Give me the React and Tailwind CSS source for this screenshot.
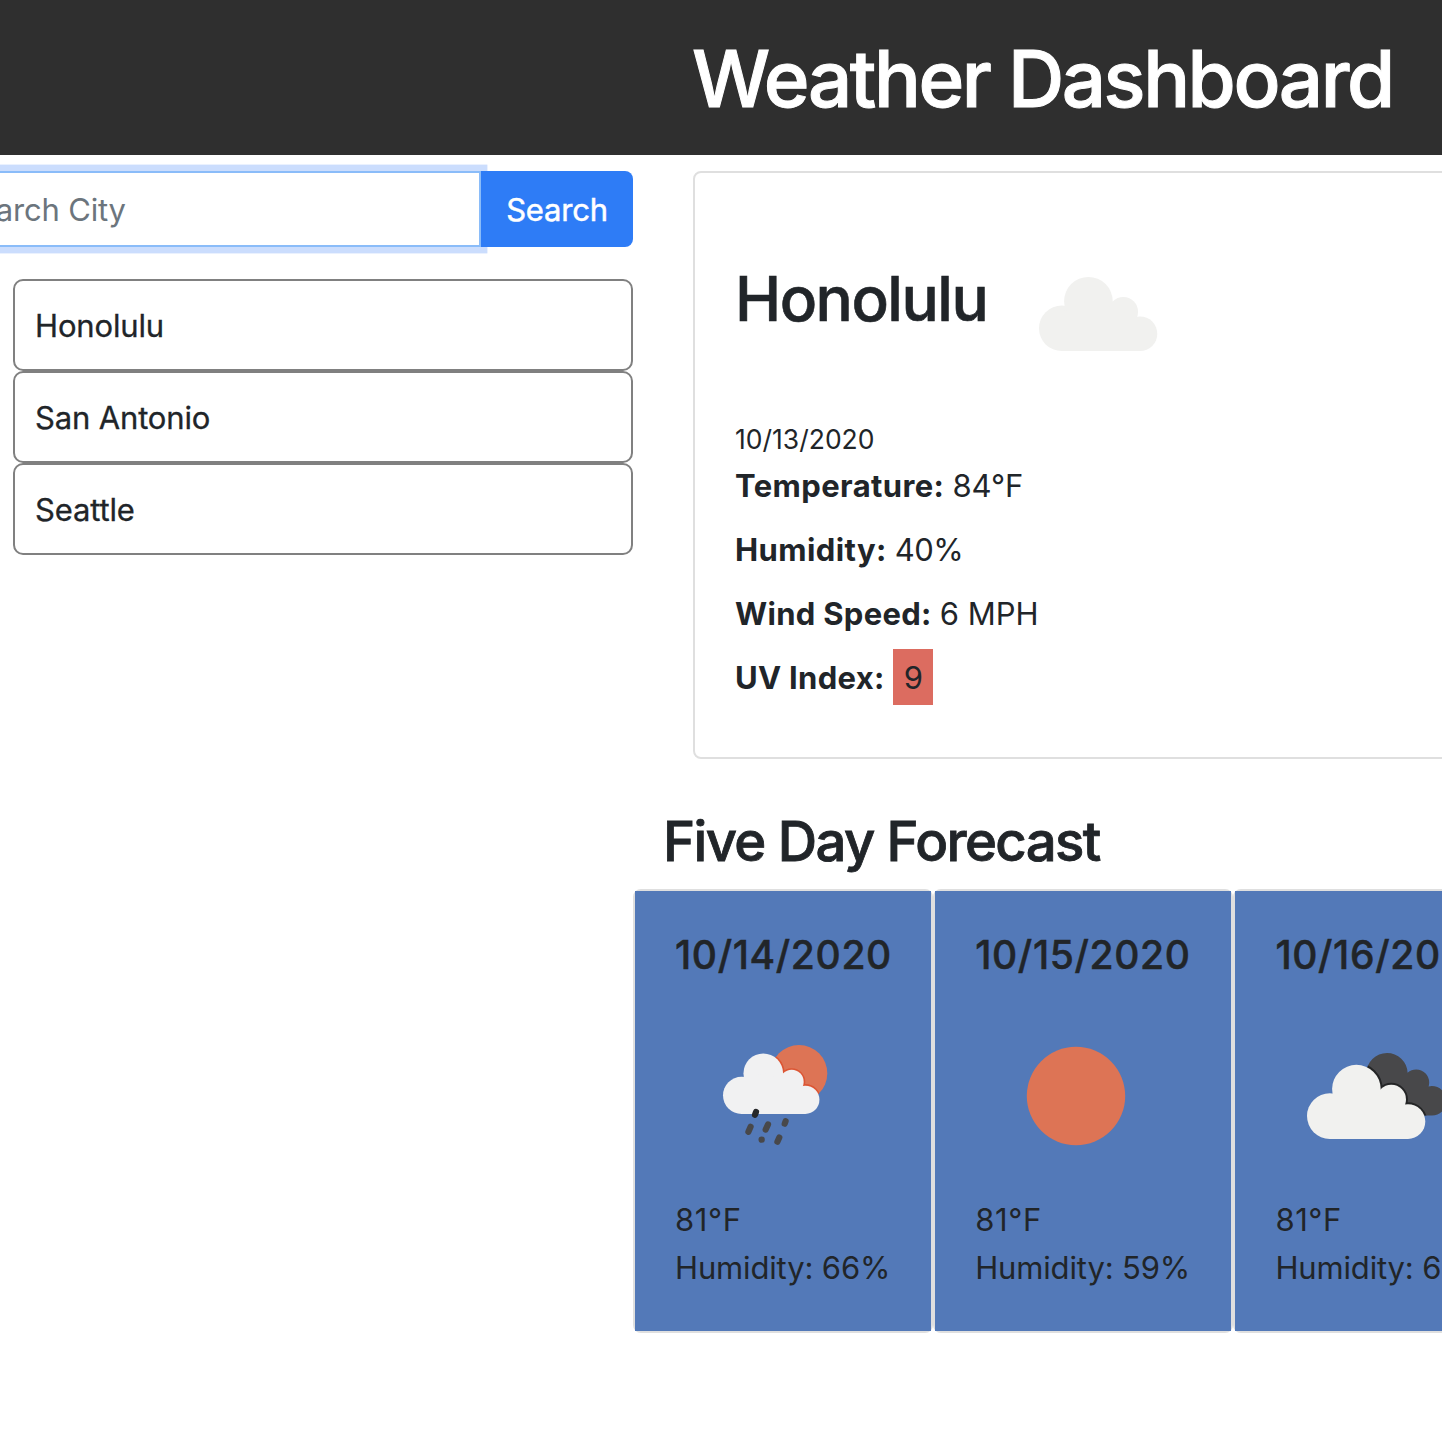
import React from 'react';

const CITIES = ['Honolulu', 'San Antonio', 'Seattle'];

const CONDITIONS = [
  { label: 'Temperature:', value: '84°F', labelClass: 'tracking-[0.4px]', valueClass: '' },
  { label: 'Humidity:', value: '40%', labelClass: 'tracking-[0.4px]', valueClass: 'tracking-[-0.6px]' },
  { label: 'Wind Speed:', value: '6 MPH', labelClass: 'tracking-[0.3px]', valueClass: '' },
];

function CloudShape(props) {
  return (
    <g {...props}>
      <circle cx="22.8" cy="51.3" r="22.8" />
      <circle cx="49.4" cy="24.3" r="24.3" />
      <circle cx="84.3" cy="34.7" r="14.7" />
      <circle cx="101" cy="56.8" r="17.3" />
      <path d="M22.8 74.1V35L49 24L84 34L101 45V74.1Z" />
    </g>
  );
}

function CloudIcon() {
  return (
    <svg viewBox="0 0 200 200" className="size-[200px] shrink-0">
      <CloudShape transform="translate(41 64)" fill="#f1f1ef" />
    </svg>
  );
}

function RainIcon() {
  return (
    <svg viewBox="0 0 200 200" className="size-[200px] shrink-0">
      <defs>
        <clipPath id="sun-disc">
          <circle cx="124" cy="77.3" r="28.3" />
        </clipPath>
      </defs>
      <circle cx="124" cy="77.3" r="28.3" fill="#dd7455" />
      <g clipPath="url(#sun-disc)">
        <CloudShape transform="translate(48 57.5) scale(0.815)" fill="#dc5533" stroke="#dc5533" strokeWidth="4" />
      </g>
      <CloudShape transform="translate(48 57.5) scale(0.815)" fill="#f1f1f2" />
      <g stroke="#48484a" strokeWidth="6.2" strokeLinecap="round">
        <path d="M80 118.8L81 116" stroke="#262729" />
        <path d="M73.4 135.8L75.6 130.8" />
        <path d="M90.7 133.6L93 128.4" />
        <path d="M86.6 143.7H86.7" />
        <path d="M109.7 127.7L110.6 125.2" />
        <path d="M102.4 145.7L104.3 141.5" />
      </g>
    </svg>
  );
}

function SunIcon() {
  return (
    <svg viewBox="0 0 200 200" className="size-[200px] shrink-0">
      <circle cx="101" cy="100" r="49.2" fill="#dd7455" />
    </svg>
  );
}

function BrokenCloudsIcon() {
  return (
    <svg viewBox="0 0 200 200" className="size-[200px] shrink-0">
      <defs>
        <clipPath id="rear-cloud">
          <circle cx="112" cy="77.5" r="20.6" />
          <circle cx="141.2" cy="86.4" r="13" />
          <circle cx="156.8" cy="104.8" r="14.7" />
          <path d="M112 77L141 80L157 100V119.5H112Z" />
        </clipPath>
      </defs>
      <g clipPath="url(#rear-cloud)">
        <rect x="80" y="50" width="100" height="80" fill="#48484a" />
        <CloudShape transform="translate(32 68.8)" fill="#242526" stroke="#242526" strokeWidth="4" />
      </g>
      <CloudShape transform="translate(32 68.8)" fill="#f1f1ef" />
    </svg>
  );
}

const FORECAST = [
  { date: '10/14/2020', Icon: RainIcon, temp: '81°F', humidity: '66%' },
  { date: '10/15/2020', Icon: SunIcon, temp: '81°F', humidity: '59%' },
  { date: '10/16/2020', Icon: BrokenCloudsIcon, temp: '81°F', humidity: '65%' },
];

function SearchForm() {
  return (
    <form className="-ml-[72px] flex h-[76px]">
      <input
        type="text"
        placeholder="Search City"
        className="w-[540px] border-2 border-[#8abcf9] bg-white pt-[2px] pl-[15px] text-[31px] tracking-[-0.2px] outline-none ring-[6.4px] ring-[#cbddfd] placeholder:text-[#6c757d] placeholder:opacity-100"
      />
      <button
        type="button"
        className="relative w-[152px] rounded-r-[8px] bg-[#2e7cf6] pt-px text-center text-[31px] leading-[76px] tracking-[-0.2px] text-white [-webkit-text-stroke:0.5px]"
      >
        Search
      </button>
    </form>
  );
}

function CurrentWeather() {
  return (
    <section className="ml-[60px] h-[588px] w-[1140px] rounded-[8px] border-2 border-[#dfdfdf] p-[40px]">
      <div className="flex h-[200px]">
        <h2 className="w-[263px] pt-[54px] text-[62px] font-medium leading-[64px] tracking-[-1.5px] [-webkit-text-stroke:0.6px]">
          Honolulu
        </h2>
        <CloudIcon />
      </div>
      <p className="mt-[7px] text-[26.5px] leading-[38px]">10/13/2020</p>
      <dl className="mt-[4px] flex flex-col gap-[16px] text-[31px] leading-[48px]">
        {CONDITIONS.map(({ label, value, labelClass, valueClass }) => (
          <div key={label} className="flex h-[48px] gap-[8px]">
            <dt className={'font-bold ' + labelClass}>{label}</dt>
            <dd className={valueClass}>{value}</dd>
          </div>
        ))}
        <div className="flex h-[48px]">
          <dt className="w-[158px] font-bold tracking-[0.3px]">UV Index:</dt>
          <dd className="-mt-[5px] h-[56px] w-[40px] bg-[#dc6c60] pt-px text-center leading-[56px] tracking-[-0.5px]">9</dd>
        </div>
      </dl>
    </section>
  );
}

function ForecastCard({ date, Icon, temp, humidity }) {
  return (
    <article className="h-[444px] w-[300.2px] shrink-0 rounded-[8px] border-2 border-[#dfdfdf]">
      <div className="h-full bg-[#5379b8] px-[40px] pt-[40px]">
        <h4 className="text-[39px] font-medium leading-[48px] tracking-[0.65px] [-webkit-text-stroke:0.5px]">{date}</h4>
        <div className="mt-[17px] -mr-10">
          <Icon />
        </div>
        <p className="text-[31px] leading-[48px] tracking-[0.6px]">{temp}</p>
        <p className="whitespace-nowrap text-[31px] leading-[48px] tracking-[-0.15px]">Humidity: {humidity}</p>
      </div>
    </article>
  );
}

export default function App() {
  return (
    <div className="h-[1442px] w-[1442px] overflow-hidden bg-white font-['Inter',sans-serif] text-[#212529]">
      <header className="flex h-[155px] bg-[#2f2f2f] pl-[692px] text-white">
        <h1 className="whitespace-nowrap pt-[1px] text-[78px] font-medium leading-[155px] tracking-[-2.45px] [-webkit-text-stroke:1px]">
          Weather Dashboard
        </h1>
      </header>
      <main className="flex pt-[16px]">
        <aside className="w-[633px] shrink-0 pl-[13px]">
          <SearchForm />
          <ul className="mt-[32px]">
            {CITIES.map((city) => (
              <li
                key={city}
                className="h-[92px] rounded-[10px] border-2 border-[#808080] pl-[20px] text-[31px] leading-[90px] tracking-[-0.15px] [-webkit-text-stroke:0.3px]"
              >
                {city}
              </li>
            ))}
          </ul>
        </aside>
        <div className="shrink-0">
          <CurrentWeather />
          <h3 className="ml-[30px] mt-[50px] text-[54.5px] font-medium leading-[64px] tracking-[-1.6px] [-webkit-text-stroke:0.8px]">
            Five Day Forecast
          </h3>
          <div className="mt-[16px] flex">
            {FORECAST.map((day) => (
              <ForecastCard key={day.date} {...day} />
            ))}
          </div>
        </div>
      </main>
    </div>
  );
}
